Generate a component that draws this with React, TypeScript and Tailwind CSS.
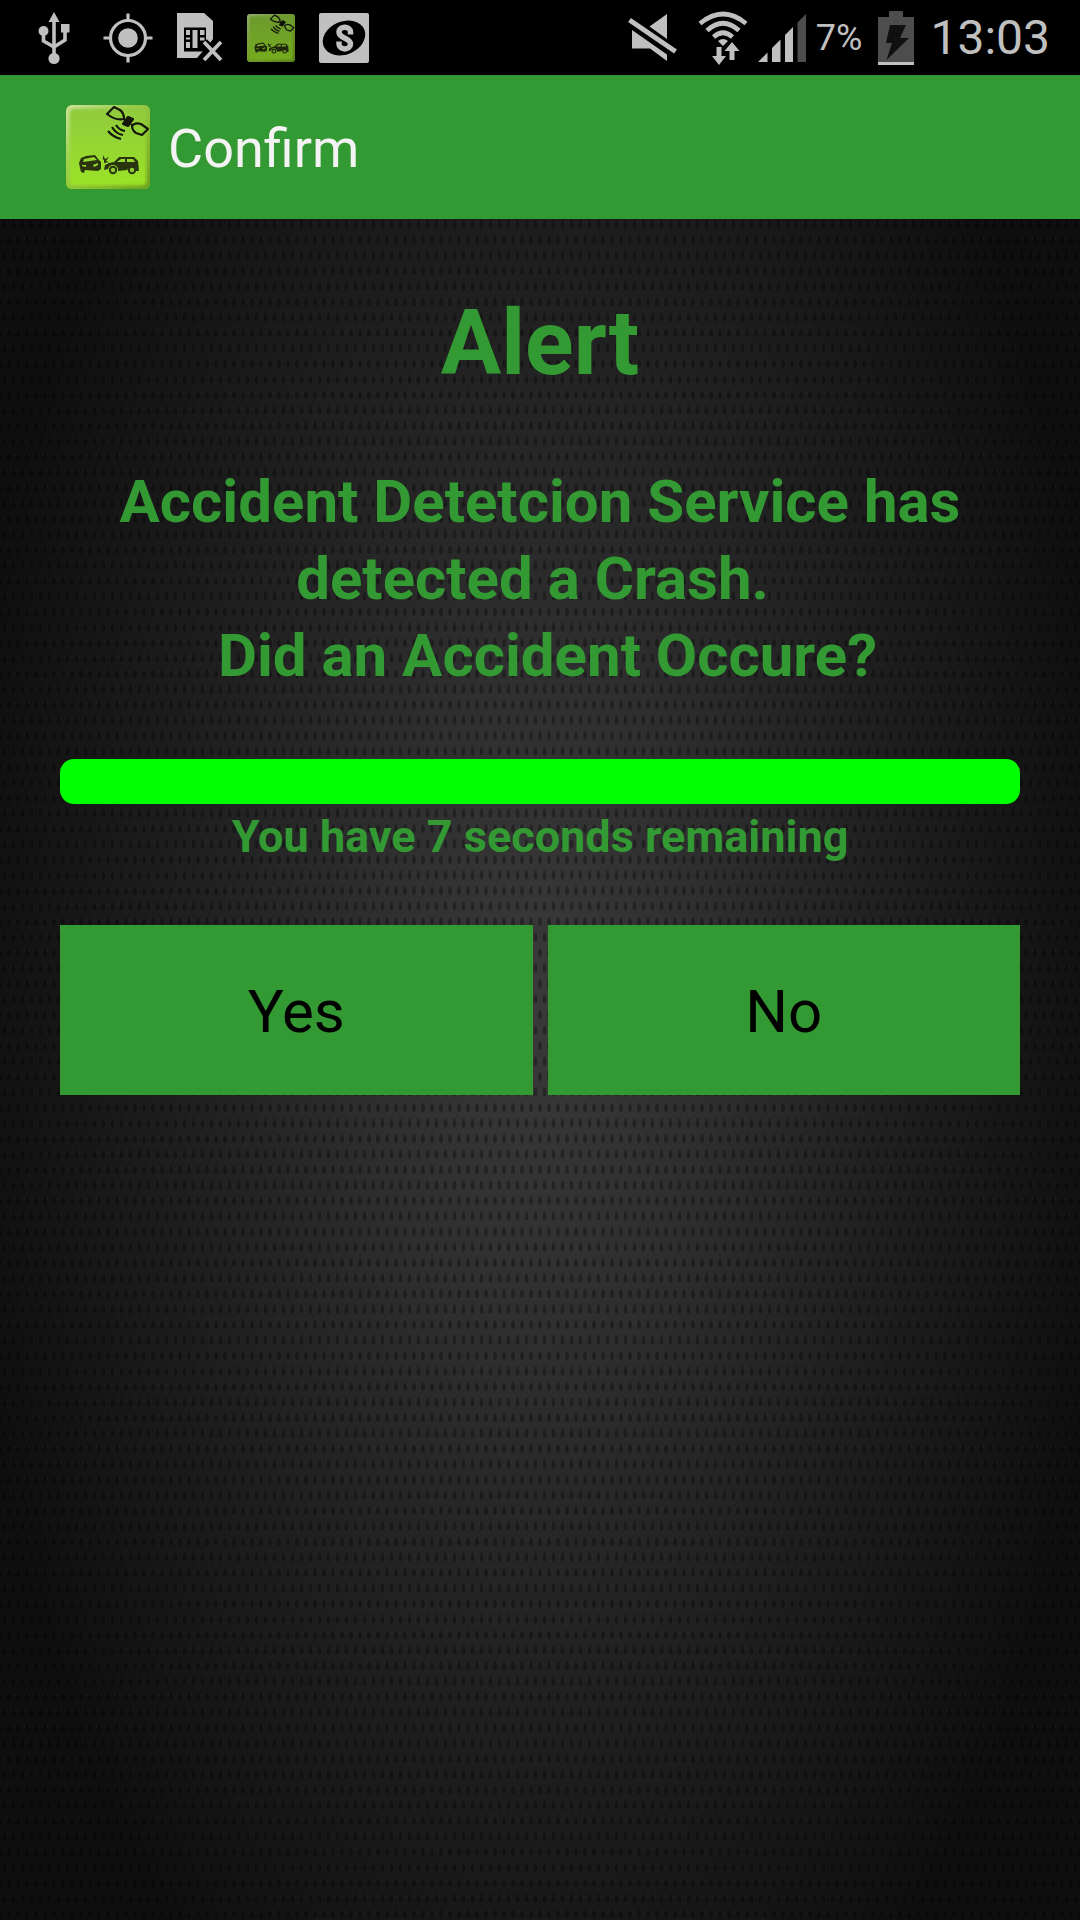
const G = '#c0c0c0'

function AppIcon({ className, dim }: { className: string; dim?: boolean }) {
  return (
    <svg viewBox="0 0 84 84" className={className} aria-hidden="true">
      <defs>
        <linearGradient id="appFill" x1="0" y1="0" x2="0" y2="1">
          <stop offset="0" stopColor="#8fc93f" />
          <stop offset="1" stopColor="#9be426" />
        </linearGradient>
        <linearGradient id="appEdge" x1="0" y1="0" x2="1" y2="1">
          <stop offset="0" stopColor="#cfe6a4" />
          <stop offset="0.35" stopColor="#9ed04f" />
          <stop offset="0.7" stopColor="#83b82a" />
          <stop offset="1" stopColor="#6c9a22" />
        </linearGradient>
        <filter id="appSoft"><feGaussianBlur stdDeviation="1.6" /></filter>
        <clipPath id="appClip"><rect width="84" height="84" rx="6" /></clipPath>
      </defs>
      <g clipPath="url(#appClip)">
        <rect width="84" height="84" fill="url(#appFill)" />
        <rect x="1" y="1" width="82" height="82" rx="7" fill="none" stroke="url(#appEdge)" strokeWidth="5" filter="url(#appSoft)" />
        <g fill="none" stroke="#14180a" strokeWidth="2.200" strokeLinejoin="round">
          <path d="M41 9L48 2L54 5Q58 8 58 14Q50 16 41 9Z" />
          <path d="M66 21Q69 17 75 19L82 24L76 30L70 28Q66 25 66 21Z" />
          <path d="M57 14L66 20" strokeWidth="1.500" />
          <path d="M62 12L67 14L62 21L57 19Z" fill="#14180a" />
          <path d="M50 20Q53 25 59 26M46 22Q50 29 57 30M42 26Q47 32 55 34" />
        </g>
        <g fill="#2a3510">
          <path fillRule="evenodd" d="M13 58L15 53L20 51L29 50L33 55L35 57L35 64L32 66L19 65L18 68L15 67L14 63Z M17 57L31 55L28 52L18 54Z M16 60L20 60L20 62L16 61Z M27 60L32 58L32 60L28 62Z" />
          <path fillRule="evenodd" d="M39 60L43 58L48 57L53 52L68 52L72 56L73 66L70 66A5 5 0 0 0 61 65L52 66A5 5 0 0 0 42 64L38 65Z M51 57L59 57L59 54L55 54Z M61 54L61 57L69 57L67 54Z" />
          <path d="M34 52L37 54L37 50L39 54L43 52L40 56L43 57L38 58L38 55Z" />
        </g>
        <g fill="#8fce35" stroke="#2a3510" strokeWidth="2">
          <circle cx="47" cy="65" r="3.200" />
          <circle cx="66" cy="65" r="3.200" />
        </g>
        {dim && <rect width="84" height="84" fill="#000" opacity="0.24" />}
      </g>
    </svg>
  )
}

function Usb() {
  return (
    <svg viewBox="0 0 34 54" className="h-[54px] w-[34px]" fill="none" stroke={G} strokeWidth="3.600" aria-hidden="true">
      <path d="M17 46V8M6.500 20V30L17 36M28 18V29L17 36" />
      <g fill={G} stroke="none">
        <path d="M17 1L22.500 11H11.500Z" /><circle cx="6.500" cy="20" r="5" /><rect x="24" y="13" width="8.500" height="8.500" /><circle cx="17" cy="47.500" r="5.600" />
      </g>
    </svg>
  )
}

function Locate() {
  return (
    <svg viewBox="0 0 50 50" className="size-[50px]" fill="none" stroke={G} strokeWidth="3.200" aria-hidden="true">
      <circle cx="25" cy="25" r="17.500" /><circle cx="25" cy="25" r="9.800" fill={G} stroke="none" />
      <path d="M25 .5V8M25 42V49.500M.5 25H8M42 25H49.500" />
    </svg>
  )
}

function Sim() {
  return (
    <svg viewBox="0 0 46 52" className="h-[52px] w-[46px]" aria-hidden="true">
      <path d="M0 1H27L36 9V46H0Z" fill={G} />
      <rect x="7" y="15.500" width="22" height="24" fill="#000" />
      <path d="M9 18h4v5h-4zM9 25.500h4v2h-4zM9 30h4v6h-4zM15.500 18h5v18h-5zM23 18h4.500v5h-4.500zM23 25.500h4.500v3h-4.500z" fill={G} />
      <path d="M20 46L33 31L36 27V46Z" fill="#000" />
      <path d="M27 30L44 47M44 30L27 47" stroke="#000" strokeWidth="8" />
      <path d="M27 30L44 48M44 30L27 48" stroke={G} strokeWidth="3.800" />
    </svg>
  )
}

function SBadge() {
  return (
    <svg viewBox="0 0 50 50" className="size-[50px]" aria-hidden="true">
      <rect width="50" height="50" rx="2" fill={G} />
      <ellipse cx="25" cy="25" rx="22" ry="16.500" transform="rotate(-23 25 25)" fill="#000" />
      <path d="M31.500 21.500V19C31.500 12.500 20 12.500 20 19C20 26 31.500 24.500 31.500 31C31.500 37.500 20 37.500 20 31V28.500" fill="none" stroke={G} strokeWidth="5.500" />
    </svg>
  )
}

function Muted() {
  return (
    <svg viewBox="0 0 50 50" className="size-[50px]" fill={G} aria-hidden="true">
      <path d="M39 1V26L21.500 13.500ZM4 17L39 41.500V48L22 35.500H4Z" />
      <path d="M1.500 7L47.500 38.500" stroke={G} strokeWidth="5" />
    </svg>
  )
}

function Wifi() {
  return (
    <svg viewBox="0 0 50 54" className="h-[54px] w-[50px]" fill="none" stroke={G} strokeWidth="4.600" aria-hidden="true">
      <path d="M2 12.500Q25 -6.500 48 12.500M9 19.500Q25 5 41 19.500M15.500 26Q25 17.500 34.500 26" />
      <path d="M20 30Q25 26 30 30L25 35Z" fill={G} stroke="none" />
      <path d="M18.500 36h5v9h4.500l-7 9l-7-9h4.500zM31.500 49h5v-9h5l-7.500-9l-7.500 9h5z" fill={G} stroke="none" />
    </svg>
  )
}

function Signal() {
  return (
    <svg viewBox="0 0 48 48" className="size-12" fill={G} aria-hidden="true">
      <path d="M0 48L9.500 38.500V48ZM14 48V34L22.500 25.500V48ZM27 48V21L35 13V48Z" /><path d="M39.500 48V8.500L48 0V48Z" fill="#4d4d4d" />
    </svg>
  )
}

function Battery() {
  return (
    <svg viewBox="0 0 36 54" className="h-[54px] w-9" aria-hidden="true">
      <path d="M0 6H11V0H25V6H36V51H0Z" fill="#4d4d4d" /><rect y="51" width="36" height="3" fill={G} />
      <path d="M12 14H28L22 27H31L8.500 49L14 32H8Z" fill="#101010" />
    </svg>
  )
}

function Mesh() {
  return (
    <svg className="absolute inset-0 size-full" aria-hidden="true">
      <defs>
        <radialGradient id="glow">
          <stop offset="0" stopColor="#393939" />
          <stop offset="0.3" stopColor="#2e2e2e" />
          <stop offset="0.65" stopColor="#1d1d1d" />
          <stop offset="1" stopColor="#0e0e0e" />
        </radialGradient>
        <pattern id="mesh" width="9" height="31" patternUnits="userSpaceOnUse">
          <g fill="none" stroke="#fff" strokeOpacity="0.03">
            <path d="M2 5Q4.500 -2 7 5M-2.500 20Q0 12 2.500 20M6.500 20Q9 12 11.500 20" />
          </g>
          <g fill="#000" fillOpacity="0.32">
            <ellipse cx="4.500" cy="5" rx="1.900" ry="4.500" />
            <ellipse cx="0" cy="20.500" rx="1.900" ry="4.500" />
            <ellipse cx="9" cy="20.500" rx="1.900" ry="4.500" />
          </g>
        </pattern>
      </defs>
      <rect width="100%" height="100%" fill="#0e0e0e" />
      <ellipse cx="50%" cy="46%" rx="54%" ry="70%" fill="url(#glow)" />
      <rect width="100%" height="100%" fill="url(#mesh)" />
    </svg>
  )
}

export default function App() {
  return (
    <div className="flex min-h-screen flex-col bg-black font-['Roboto',sans-serif]">
      <div className="flex h-[75px] items-center justify-between pr-[30px] pl-[37px] text-[#c0c0c0]">
        <div className="flex items-center gap-6">
          <div className="flex items-center gap-8"><Usb /><Locate /></div>
          <Sim /><AppIcon className="size-12" dim /><SBadge />
        </div>
        <div className="flex items-center gap-4">
          <div className="flex items-center gap-5">
            <Muted />
            <div className="flex items-center gap-2.5"><Wifi /><Signal /><span className="text-[36px]">7%</span></div>
          </div>
          <Battery />
          <time className="text-[48px]">13:03</time>
        </div>
      </div>
      <header className="flex h-36 items-center gap-[18px] bg-[#339933] px-[66px]">
        <AppIcon className="size-[84px]" />
        <h1 className="pt-1 text-[54px] leading-none text-[#f3f3f3]">Confirm</h1>
      </header>
      <main className="relative flex grow flex-col overflow-hidden px-[60px] text-center font-bold text-[#339933]">
        <Mesh />
        <div className="relative flex flex-col">
          <h2 className="mt-[72px] text-[90px] leading-[106px]">Alert</h2>
          <p className="mt-[66px] text-[60px] leading-[77px] whitespace-pre-wrap">{'Accident Detetcion Service has\ndetected a Crash. \n Did an Accident Occure?'}</p>
          <div role="progressbar" aria-label="Time remaining" aria-valuenow={7} aria-valuemin={0} aria-valuemax={7} className="mt-[65px] h-[45px] rounded-[14px] bg-[#00ff00]" />
          <p className="mt-[3px] text-[45px] leading-[60px]">You have 7 seconds remaining</p>
          <div className="mt-[58px] grid grid-cols-2 gap-[15px] text-[60px] font-normal text-black">
            <button type="button" className="h-[170px] bg-[#339933] pt-1">Yes</button>
            <button type="button" className="h-[170px] bg-[#339933] pt-1">No</button>
          </div>
        </div>
      </main>
    </div>
  )
}
